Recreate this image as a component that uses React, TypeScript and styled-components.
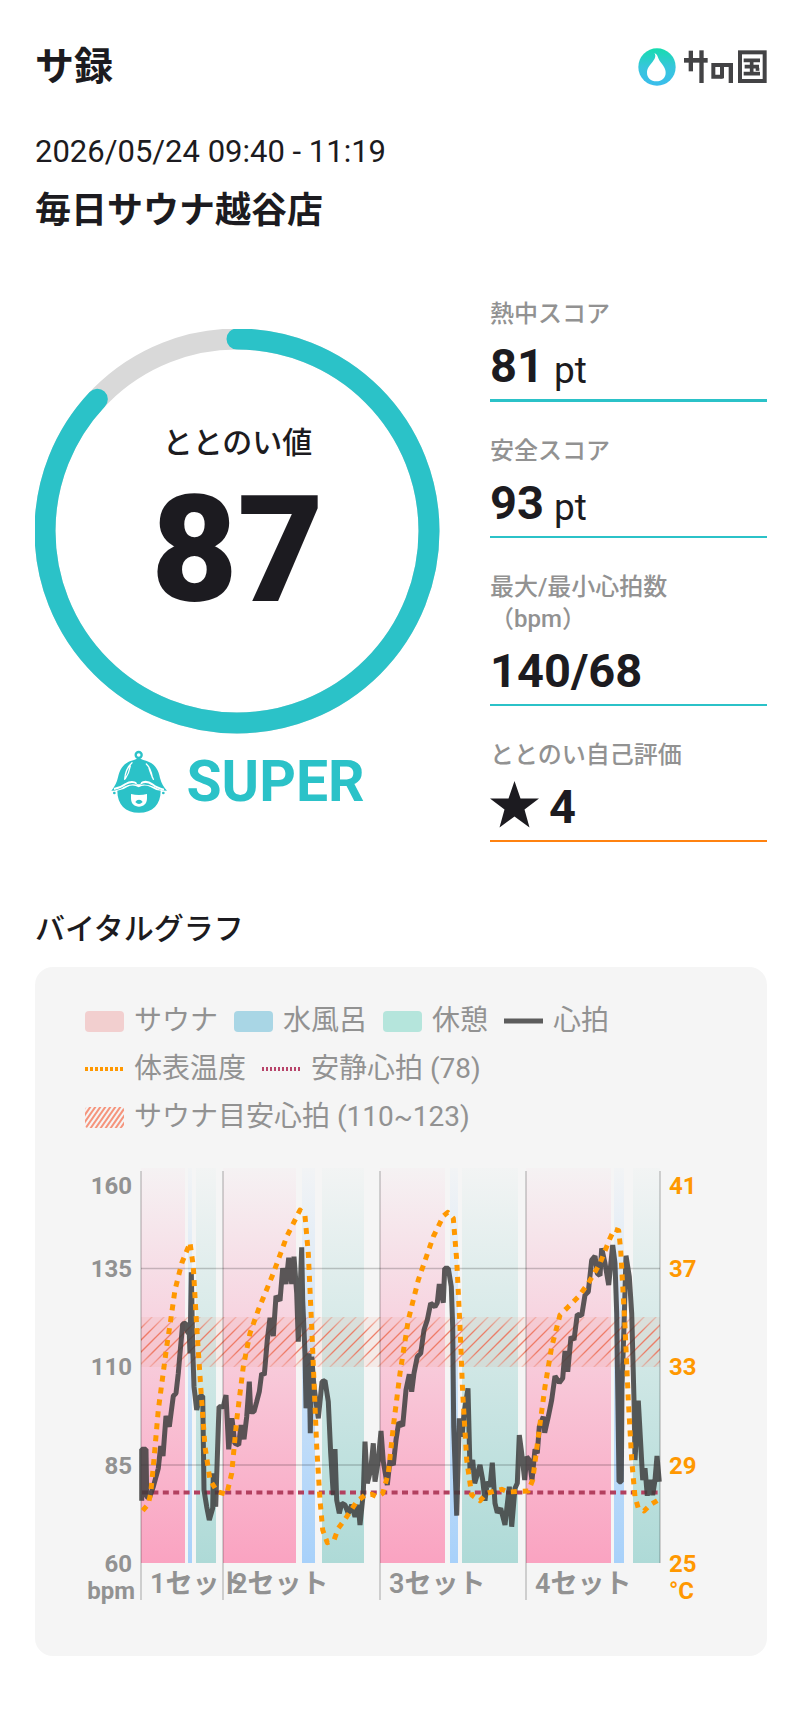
import React from "react";
import styled, { createGlobalStyle } from "styled-components";

const TEAL = "#2bc2c8";
const INK = "#1c1b20";
const GREY = "#929292";
const ORANGE = "#ff9800";
const FONT = `Roboto, "Noto Sans CJK JP", sans-serif`;

const GlobalStyle = createGlobalStyle`
  *, *::before, *::after { box-sizing: border-box; }
  body { margin: 0; background: #fff; color: ${INK}; font-family: ${FONT}; }
`;

const Page = styled.main`
  padding: 43px 33px 54px 35px;
`;

const Header = styled.header`
  display: flex;
  align-items: center;
  justify-content: space-between;
`;

const PageTitle = styled.h1`
  margin: 0;
  font-size: 39px;
  font-weight: 700;
  line-height: 48px;
`;

const Visit = styled.section`
  display: flex;
  flex-direction: column;
  gap: 15px;
  margin-top: 41px;
`;

const VisitTime = styled.time`
  font-size: 31px;
  font-weight: 400;
  line-height: 40px;
`;

const VisitPlace = styled.h2`
  margin: 0;
  font-size: 36px;
  font-weight: 700;
  line-height: 48px;
`;

const Summary = styled.section`
  display: grid;
  grid-template-columns: 405fr 277fr;
  column-gap: 50px;
  margin-top: 62px;
`;

const ScoreColumn = styled.div`
  display: flex;
  flex-direction: column;
  align-items: center;
  padding-top: 32px;
`;

const Gauge = styled.div`
  display: grid;
  width: 100%;
  > * { grid-area: 1 / 1; }
  > svg { display: block; width: 100%; }
`;

const GaugeText = styled.div`
  display: flex;
  flex-direction: column;
  align-items: center;
  padding-top: 94px;
`;

const GaugeLabel = styled.span`
  font-size: 30px;
  font-weight: 500;
  line-height: 40px;
`;

const GaugeValue = styled.strong`
  margin-top: 13px;
  font-size: 149px;
  font-weight: 900;
  line-height: 149px;
`;

const Rank = styled.div`
  display: flex;
  align-items: center;
  gap: 20px;
  margin-top: 16px;
  color: ${TEAL};
  font-size: 57px;
  font-weight: 700;
  line-height: 64px;
`;

const Stats = styled.dl`
  display: flex;
  flex-direction: column;
  gap: 32px;
  margin: 0;
`;

const Stat = styled.div<{ $line: string; $thick?: boolean }>`
  border-bottom: ${(p) => (p.$thick ? 3 : 2)}px solid ${(p) => p.$line};
`;

const StatLabel = styled.dt`
  padding-top: 1px;
  color: ${GREY};
  font-size: 24px;
  font-weight: 500;
  line-height: 32px;
`;

const StatValue = styled.dd`
  display: flex;
  align-items: flex-end;
  gap: 10px;
  height: 69px;
  margin: 0;
  padding-bottom: 10px;
  font-size: 47px;
  font-weight: 700;
  line-height: 47px;
`;

const Unit = styled.span`
  font-size: 37px;
  font-weight: 400;
  line-height: 36px;
`;

const GraphTitle = styled.h2`
  margin: 67px 0 18px;
  font-size: 30px;
  font-weight: 500;
  line-height: 40px;
`;

const Card = styled.section`
  padding: 30px 50px 46px;
  border-radius: 18px;
  background: #f5f5f5;
`;

const Legend = styled.ul`
  display: flex;
  flex-wrap: wrap;
  column-gap: 16px;
  margin: 0 0 19px;
  padding: 0;
  list-style: none;
`;

const LegendItem = styled.li`
  display: flex;
  align-items: center;
  gap: 10px;
  color: ${GREY};
  font-size: 28px;
  line-height: 48px;
  white-space: nowrap;
`;

const Swatch = styled.span<{ $color: string }>`
  width: 39px;
  height: 21px;
  border-radius: 4px;
  background: ${(p) => p.$color};
`;

const Chart = styled.svg`
  display: block;
  width: 100%;
  font-family: ${FONT};
`;

const SERIES_UNIT = 3;

// Heart rate samples: x, y in thirds of a chart unit.
const HEART = [
  [170, 1022], [170, 868], [183, 868], [185, 1010], [193, 1015], [205, 980], [220, 925], [227, 858], [234, 888],
  [243, 768], [253, 800], [265, 708], [273, 700], [280, 640], [285, 580], [293, 492], [303, 490], [307, 515],
  [313, 522], [315, 580], [319, 337], [323, 560], [327, 680], [335, 750], [345, 708], [353, 708], [357, 990],
  [365, 1040], [373, 1080], [383, 1045], [385, 940], [392, 1040], [402, 740], [415, 740], [423, 705], [431, 868],
  [441, 775], [449, 850], [461, 855], [468, 795], [477, 838], [485, 770], [493, 665], [497, 755], [507, 755],
  [515, 725], [523, 695], [530, 640], [538, 645], [547, 540], [555, 473], [565, 528], [573, 408], [585, 422],
  [593, 325], [603, 372], [611, 293], [620, 372], [627, 290], [635, 400], [640, 545], [650, 262], [653, 420],
  [660, 580], [663, 745], [672, 580], [676, 820], [680, 590], [687, 680], [700, 775], [711, 665], [720, 662],
  [730, 725], [737, 880], [745, 1005], [750, 867], [755, 1020], [763, 1060], [770, 1030], [780, 1035],
  [790, 1060], [800, 1035], [810, 1070], [820, 1035], [825, 1095], [835, 1000], [840, 845], [847, 970],
  [857, 930], [865, 850], [870, 965], [880, 900], [888, 813], [895, 905], [907, 975], [915, 900], [925, 915],
  [933, 840], [941, 787], [953, 798], [963, 690], [973, 643], [980, 695], [987, 640], [997, 590], [1007, 580],
  [1017, 510], [1027, 480], [1037, 430], [1050, 440], [1057, 428], [1063, 372], [1075, 428], [1079, 325],
  [1090, 325], [1099, 380], [1103, 500], [1106, 800], [1115, 1067], [1123, 775], [1131, 830], [1137, 760],
  [1149, 685], [1155, 930], [1163, 900], [1169, 970], [1185, 915], [1193, 960], [1200, 1022], [1207, 965],
  [1215, 980], [1222, 908], [1230, 1030], [1237, 1058], [1247, 1045], [1260, 1095], [1266, 1040], [1273, 980],
  [1280, 1100], [1290, 985], [1297, 970], [1303, 825], [1309, 870], [1319, 960],
  [1325, 890], [1333, 900], [1341, 960], [1350, 868], [1357, 880], [1363, 800], [1375, 770], [1379, 818],
  [1390, 770], [1400, 720], [1410, 648], [1423, 668], [1433, 655], [1440, 573], [1448, 635], [1458, 530],
  [1467, 540], [1477, 463], [1490, 467], [1500, 405], [1510, 395], [1520, 300], [1530, 288], [1537, 340],
  [1545, 347], [1550, 265], [1560, 310], [1571, 375], [1583, 255], [1590, 310], [1595, 460], [1602, 965],
  [1609, 965], [1611, 680], [1617, 500], [1623, 287], [1633, 350], [1640, 460], [1647, 720], [1650, 900],
  [1660, 722], [1673, 960], [1680, 925], [1687, 1007], [1695, 960], [1703, 1005], [1710, 960], [1716, 888],
  [1723, 965],
];

const TEMPERATURE = [
  [173, 1052], [190, 1032], [197, 1000], [205, 920], [220, 750], [245, 560], [257, 480], [270, 390], [290, 310],
  [315, 248], [325, 320], [335, 500], [347, 680], [360, 860], [375, 960], [397, 995], [425, 1003], [440, 940],
  [455, 780], [475, 620], [495, 520], [520, 450], [565, 340], [605, 230], [645, 150], [660, 168], [670, 280],
  [680, 500], [695, 860], [705, 1020], [713, 1110], [727, 1148], [747, 1140], [760, 1105], [785, 1070],
  [815, 1025], [840, 1005], [860, 1003], [875, 1010], [893, 1000], [910, 940], [925, 800], [945, 640],
  [970, 480], [1000, 360], [1045, 230], [1075, 168], [1088, 157], [1105, 175], [1115, 300], [1125, 500],
  [1133, 700], [1145, 900], [1160, 1005], [1185, 1022], [1205, 1000], [1250, 988], [1270, 996], [1330, 993],
  [1343, 960], [1360, 830], [1380, 680], [1400, 560], [1425, 465], [1450, 440], [1480, 410], [1510, 370],
  [1545, 310], [1575, 235], [1588, 208], [1601, 212], [1607, 270], [1620, 500], [1630, 720], [1640, 900],
  [1650, 1010], [1660, 1045], [1677, 1053], [1695, 1035], [1723, 1018],
];

const toPoints = (series: number[][]) =>
  series.map(([x, y]) => `${(x / SERIES_UNIT).toFixed(1)},${(y / SERIES_UNIT).toFixed(1)}`).join(" ");

const BANDS: { kind: string; from: number; to: number }[] = [
  { kind: "sauna", from: 56, to: 100 },
  { kind: "water", from: 103, to: 107 },
  { kind: "rest", from: 111, to: 131 },
  { kind: "sauna", from: 138, to: 211 },
  { kind: "water", from: 217, to: 230 },
  { kind: "rest", from: 237, to: 279 },
  { kind: "sauna", from: 295, to: 360 },
  { kind: "water", from: 365, to: 373 },
  { kind: "rest", from: 377, to: 433 },
  { kind: "sauna", from: 441, to: 526 },
  { kind: "water", from: 529, to: 539 },
  { kind: "rest", from: 548, to: 575 },
];

const BAND_COLORS: Record<string, string> = { sauna: "#faa3c1", water: "#a8d1fa", rest: "#aedad7" };
const SETS = [56, 138, 295, 441];
const HEART_TICKS: [string, number][] = [["160", 34], ["135", 117], ["110", 215], ["85", 314], ["60", 412], ["bpm", 439]];
const TEMP_TICKS: [string, number][] = [["41", 34], ["37", 117], ["33", 215], ["29", 314], ["25", 412], ["°C", 439]];

function BrandLogo() {
  return (
    <svg width="130" height="40" viewBox="52 47 390 120" role="img" aria-label="サの国">
      <defs>
        <linearGradient id="brand" x1="0" y1="0" x2="0" y2="1">
          <stop offset="0" stopColor="#16dcae" />
          <stop offset="0.5" stopColor="#37c6dc" />
          <stop offset="1" stopColor="#3abdec" />
        </linearGradient>
      </defs>
      <circle cx="112" cy="107" r="56" fill="url(#brand)" />
      <path d="M104 65C116 70 113 80 123 93C131 104 138 111 138 124C138 140 126 150 110 150C94 150 82 140 82 124C82 109 91 101 99 91C106 82 110 74 104 65Z" fill="#fff" />
      <g fill="#434345">
        <rect x="193" y="80" width="71" height="14" />
        <rect x="207" y="58" width="13" height="62" />
        <rect x="239" y="57" width="13" height="98" />
        <rect x="327" y="95" width="13" height="60" />
        <rect x="301" y="95" width="12" height="46" />
      </g>
      <g fill="none" stroke="#434345" strokeWidth="12">
        <path d="M333 101H281V136H309" />
        <rect x="361" y="63" width="74" height="86" />
        <path d="M372 87H421M375 106H418M372 127H421M396 87V127" strokeWidth="11" />
        <path d="M408 114H419" strokeWidth="9" />
      </g>
    </svg>
  );
}

function SaunaFace() {
  return (
    <svg width="56" height="64" viewBox="35 28 168 192" aria-hidden="true">
      <circle cx="118" cy="43" r="9" fill="none" stroke={TEAL} strokeWidth="7" />
      <path d="M104 58Q118 50 132 58C164 65 177 84 182 112Q188 135 203 150Q182 150 165 139Q143 128 118 133Q94 126 74 138Q58 149 36 150Q51 133 56 110C62 82 76 64 104 58Z" fill={TEAL} />
      <path d="M98 66Q78 84 76 116M93 76Q89 98 78 114M141 70Q154 82 159 110M148 78Q151 92 162 116" fill="none" stroke="#fff" strokeWidth="4" strokeLinecap="round" />
      <path d="M54 150Q72 148 84 139Q101 130 118 140Q135 130 153 139Q168 149 184 150C184 192 160 216 119 216C78 216 54 192 54 150Z" fill={TEAL} />
      <path d="M44 145Q66 140 79 130Q97 119 112 128Q118 132 124 128Q141 118 159 131Q172 142 194 147" fill="none" stroke="#fff" strokeWidth="6" />
      <path d="M110 122Q118 128 127 122L123 130Q118 132 113 130Z" fill={TEAL} />
      <circle cx="45" cy="157" r="4" fill={TEAL} />
      <circle cx="192" cy="157" r="4" fill={TEAL} />
      <path d="M95 160Q119 166 143 160V173C143 190 132 198 119 198C106 198 95 190 95 173Z" fill="#fff" />
      <path d="M108 184Q112 177 119 177Q126 177 130 184Q124 190 119 190Q113 190 108 184Z" fill={TEAL} />
    </svg>
  );
}

function ScoreRing({ value }: { value: number }) {
  const r = 192;
  const length = 2 * Math.PI * r;
  return (
    <svg viewBox="0 0 405 405" aria-hidden="true">
      <circle cx="202" cy="202" r={r} fill="none" stroke="#d9d9d9" strokeWidth="21" />
      <circle
        cx="202"
        cy="202"
        r={r}
        fill="none"
        stroke={TEAL}
        strokeWidth="21"
        strokeLinecap="round"
        strokeDasharray={`${(length * value) / 100} ${length}`}
        transform="rotate(-90 202 202)"
      />
    </svg>
  );
}

function LineKey({ color, dash, width = 5 }: { color: string; dash?: string; width?: number }) {
  return (
    <svg width="39" height="6" viewBox="0 0 39 6" aria-hidden="true">
      <path d="M0 3H39" stroke={color} strokeWidth={width} strokeDasharray={dash} />
    </svg>
  );
}

function HatchKey() {
  return (
    <svg width="39" height="21" viewBox="0 0 39 21" aria-hidden="true">
      <defs>
        <clipPath id="keyClip"><rect width="39" height="21" rx="3" /></clipPath>
      </defs>
      <g clipPath="url(#keyClip)" stroke="#f5947c" strokeWidth="2">
        {Array.from({ length: 11 }, (_, i) => (
          <path key={i} d={`M${i * 5 - 15} 22L${i * 5 + 1} -1`} />
        ))}
      </g>
    </svg>
  );
}

function VitalChart() {
  return (
    <Chart viewBox="0 0 632 450" role="img" aria-label="バイタルグラフ">
      <defs>
        {Object.entries(BAND_COLORS).map(([kind, color]) => (
          <linearGradient key={kind} id={kind} x1="0" y1="0" x2="0" y2="1">
            <stop offset="0" stopColor={color} stopOpacity="0.04" />
            <stop offset="1" stopColor={color} />
          </linearGradient>
        ))}
        <linearGradient id="hatch" gradientUnits="userSpaceOnUse" x1="0" y1="157" x2="0" y2="207">
          <stop offset="0" stopColor="#ee6e55" stopOpacity="0.3" />
          <stop offset="0.3" stopColor="#ee6e55" stopOpacity="0.85" />
          <stop offset="0.7" stopColor="#ee6e55" stopOpacity="0.85" />
          <stop offset="1" stopColor="#ee6e55" stopOpacity="0.3" />
        </linearGradient>
        <clipPath id="target"><rect x="56" y="157" width="519" height="50" /></clipPath>
      </defs>
      {BANDS.map((b) => (
        <rect key={b.from} x={b.from} y="8" width={b.to - b.from} height="395" fill={`url(#${b.kind})`} />
      ))}
      <rect x="56" y="157" width="519" height="50" fill="#f08a70" opacity="0.1" />
      <g clipPath="url(#target)" stroke="url(#hatch)" strokeWidth="1.3">
        {Array.from({ length: 48 }, (_, i) => (
          <path key={i} d={`M${i * 12 + 4} 208L${i * 12 + 56} 156`} />
        ))}
      </g>
      <g stroke="#000" strokeOpacity="0.2" strokeWidth="1.6">
        <path d="M56 108.500H575M56 305H575" />
        {SETS.map((x) => (
          <path key={x} d={`M${x} 11V440`} />
        ))}
        <path d="M575 11V403" />
      </g>
      <path d="M57 332.500H575" stroke="#b2405f" strokeWidth="4" strokeDasharray="6 4.4" />
      <polyline points={toPoints(HEART)} fill="none" stroke="#3c3c3c" strokeOpacity="0.84" strokeWidth="5" strokeLinejoin="bevel" />
      <polyline points={toPoints(TEMPERATURE)} fill="none" stroke={ORANGE} strokeWidth="5" strokeDasharray="6 6" strokeLinejoin="round" />
      <g fill={GREY} fontSize="24" fontWeight="700" textAnchor="end">
        {HEART_TICKS.map(([t, y]) => (
          <text key={t} x={t === "bpm" ? 50 : 47} y={y}>{t}</text>
        ))}
      </g>
      <g fill={ORANGE} fontSize="24" fontWeight="700">
        {TEMP_TICKS.map(([t, y]) => (
          <text key={t} x="584" y={y}>{t}</text>
        ))}
      </g>
      <g fill={GREY} fontSize="27" fontWeight="600">
        {SETS.map((x, i) => (
          <text key={x} x={x + 9} y="433">{`${i + 1}セット`}</text>
        ))}
      </g>
    </Chart>
  );
}

export default function App() {
  return (
    <Page>
      <GlobalStyle />
      <Header>
        <PageTitle>サ録</PageTitle>
        <BrandLogo />
      </Header>

      <Visit>
        <VisitTime dateTime="2026-05-24T09:40">2026/05/24 09:40 - 11:19</VisitTime>
        <VisitPlace>毎日サウナ越谷店</VisitPlace>
      </Visit>

      <Summary>
        <ScoreColumn>
          <Gauge>
            <ScoreRing value={87} />
            <GaugeText>
              <GaugeLabel>ととのい値</GaugeLabel>
              <GaugeValue>87</GaugeValue>
            </GaugeText>
          </Gauge>
          <Rank>
            <SaunaFace />
            <span>SUPER</span>
          </Rank>
        </ScoreColumn>

        <Stats>
          <Stat $line={TEAL} $thick>
            <StatLabel>熱中スコア</StatLabel>
            <StatValue>81<Unit>pt</Unit></StatValue>
          </Stat>
          <Stat $line={TEAL}>
            <StatLabel>安全スコア</StatLabel>
            <StatValue>93<Unit>pt</Unit></StatValue>
          </Stat>
          <Stat $line={TEAL}>
            <StatLabel>最大/最小心拍数<br />（bpm）</StatLabel>
            <StatValue>140/68</StatValue>
          </Stat>
          <Stat $line="#ff8210">
            <StatLabel>ととのい自己評価</StatLabel>
            <StatValue>
              <svg width="49" height="49" viewBox="0 0 49 49" aria-hidden="true">
                <path d="M24.500 0L30.500 17.500H49L34.500 28.500L39.500 46.500L24.500 35.500L9.500 46.500L14.500 28.500L0 17.500H18.500Z" fill={INK} />
              </svg>
              4
            </StatValue>
          </Stat>
        </Stats>
      </Summary>

      <GraphTitle>バイタルグラフ</GraphTitle>
      <Card>
        <Legend>
          <LegendItem><Swatch $color="#f2cfcf" />サウナ</LegendItem>
          <LegendItem><Swatch $color="#a9d6e5" />水風呂</LegendItem>
          <LegendItem><Swatch $color="#b5e5dc" />休憩</LegendItem>
          <LegendItem><LineKey color="#5c5c5c" />心拍</LegendItem>
          <LegendItem><LineKey color={ORANGE} dash="3 2" width={4} />体表温度</LegendItem>
          <LegendItem><LineKey color="#b8446a" dash="2 2" width={4} />安静心拍 (78)</LegendItem>
          <LegendItem><HatchKey />サウナ目安心拍 (110~123)</LegendItem>
        </Legend>
        <VitalChart />
      </Card>
    </Page>
  );
}
